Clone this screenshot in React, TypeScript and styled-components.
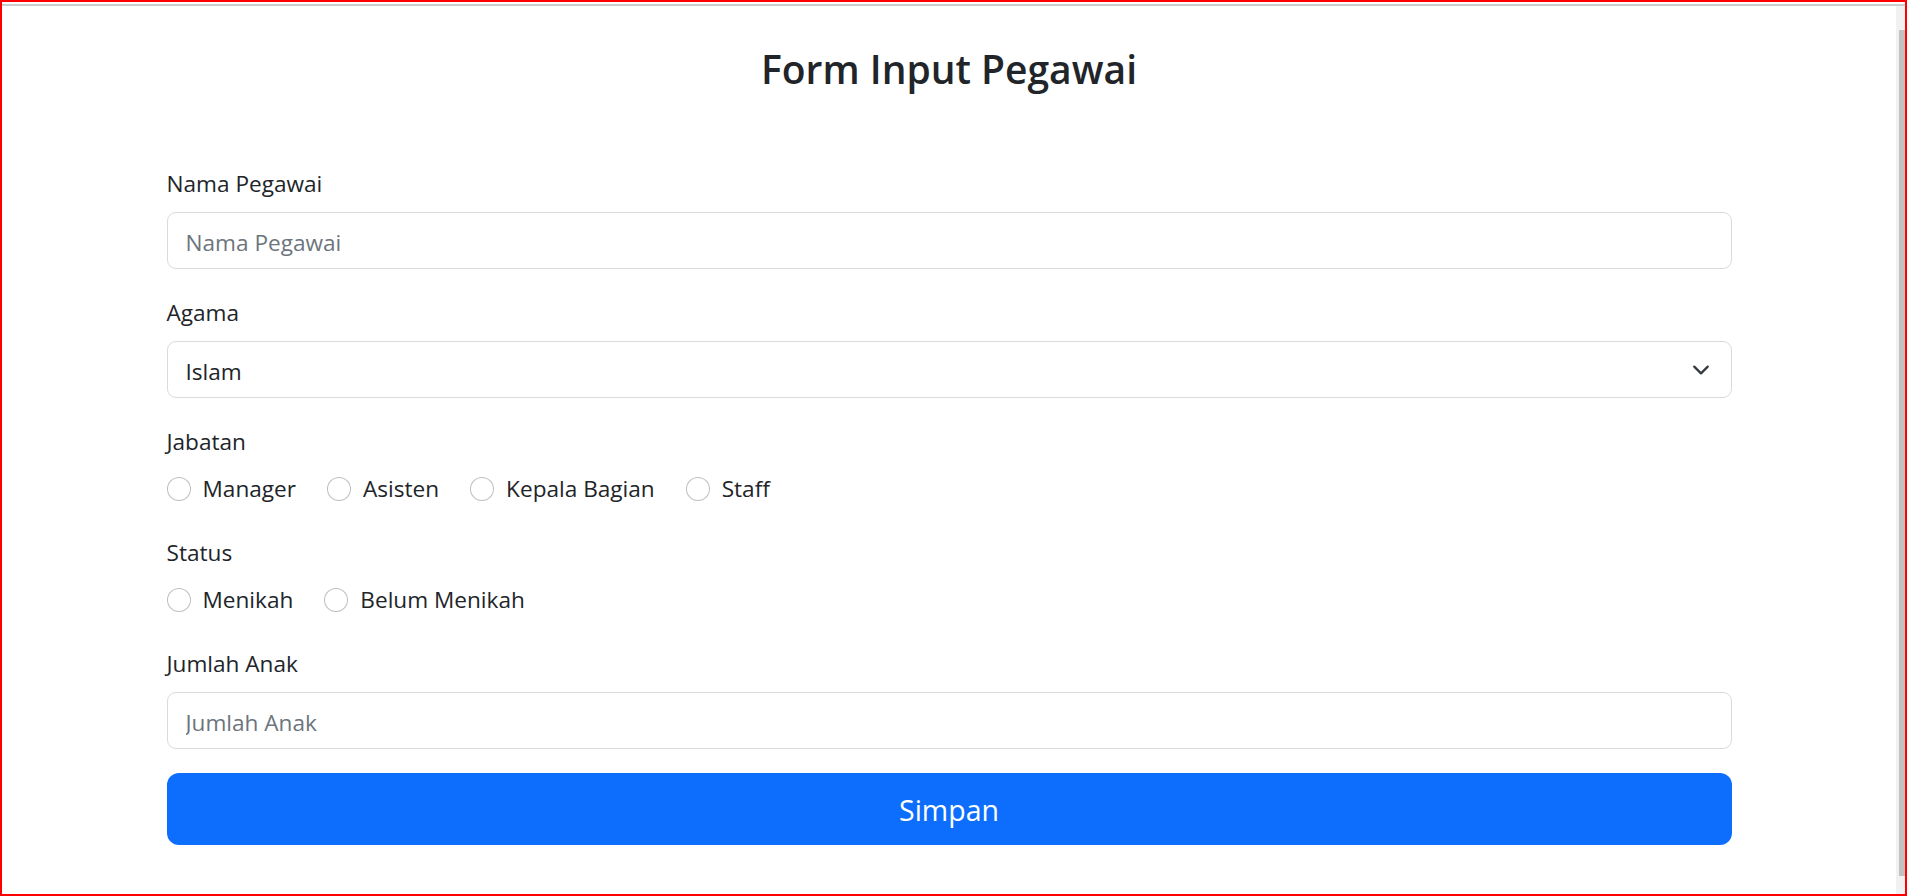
import styled, { createGlobalStyle } from 'styled-components';

const GlobalStyle = createGlobalStyle`
  html, body {
    margin: 0;
    padding: 0;
    background: #fff;
  }
  body {
    font-family: "Open Sans", "Noto Sans", sans-serif;
    color: #212529;
    overflow: hidden;
  }
  * {
    box-sizing: border-box;
  }
`;

const Frame = styled.div`
  width: 1907px;
  height: 896px;
  border: 2px solid #ff0000;
  display: flex;
  flex-direction: column;
  background: #fff;
`;

const ChromeEdge = styled.div`
  flex-shrink: 0;
  height: 2px;
  margin-top: 2px;
  background: #c8cfd0;
`;

const Viewport = styled.div`
  flex: 1;
  display: flex;
  min-height: 0;
`;

const Page = styled.main`
  flex: 1;
  padding-top: 39px;
  overflow: hidden;
`;

const Scrollbar = styled.div`
  width: 9px;
  display: flex;
  padding: 24px 0 18px 3px;
  background: #f1f1f1;
`;

const Thumb = styled.div`
  flex: 1;
  background: #c1c1c1;
`;

const Container = styled.div`
  width: 1565px;
  margin: 0 auto;
`;

const Title = styled.h3`
  margin: 0 0 71px;
  text-align: center;
  font-size: 39px;
  line-height: 48px;
  font-weight: 600;
  color: #212529;
`;

const Field = styled.div<{ $gap?: number }>`
  margin-bottom: ${(p) => p.$gap ?? 24}px;
`;

const Label = styled.label`
  display: block;
  padding-top: 2px;
  margin-bottom: 10px;
  font-size: 22.6px;
  line-height: 36px;
`;

const TextInput = styled.input`
  display: block;
  width: 100%;
  height: 57px;
  padding: 3px 18px 0;
  font-family: inherit;
  font-size: 22.6px;
  color: #212529;
  background: #fff;
  border: 1px solid #d8dbdf;
  border-radius: 9px;
  outline: none;

  &::placeholder {
    color: #6c757d;
  }
`;

const SelectWrap = styled.div`
  position: relative;
`;

const Select = styled.select`
  display: block;
  width: 100%;
  height: 57px;
  padding: 3px 54px 0 18px;
  font-family: inherit;
  font-size: 22.6px;
  color: #212529;
  background: #fff;
  border: 1px solid #d8dbdf;
  border-radius: 9px;
  appearance: none;
  outline: none;
`;

const Chevron = styled.svg`
  position: absolute;
  right: 22px;
  top: 50%;
  width: 18px;
  height: 18px;
  transform: translateY(-50%);
  pointer-events: none;
`;

const RadioRow = styled.div`
  display: flex;
  align-items: center;
  gap: 31px;
  height: 36px;
  padding-top: 2px;
`;

const RadioOption = styled.label`
  display: flex;
  align-items: center;
  gap: 12px;
  font-size: 22.6px;
  line-height: 34px;
`;

const Radio = styled.input`
  appearance: none;
  width: 24px;
  height: 24px;
  margin: 0 0 1px;
  border: 1px solid rgba(0, 0, 0, 0.25);
  border-radius: 50%;
  background: #fff;
`;

const SubmitButton = styled.button`
  display: block;
  width: 100%;
  height: 72px;
  padding-top: 2px;
  border: none;
  border-radius: 12px;
  background: #0d6efd;
  color: #fff;
  font-family: inherit;
  font-size: 28.5px;
`;

const jabatan = ['Manager', 'Asisten', 'Kepala Bagian', 'Staff'];
const status = ['Menikah', 'Belum Menikah'];

export default function App() {
  return (
    <>
      <GlobalStyle />
      <Frame>
        <ChromeEdge />
        <Viewport>
          <Page>
            <Container>
              <Title>Form Input Pegawai</Title>

              <Field>
                <Label htmlFor="nama">Nama Pegawai</Label>
                <TextInput id="nama" placeholder="Nama Pegawai" />
              </Field>

              <Field>
                <Label htmlFor="agama">Agama</Label>
                <SelectWrap>
                  <Select id="agama" defaultValue="Islam">
                    <option>Islam</option>
                    <option>Kristen</option>
                    <option>Katolik</option>
                    <option>Hindu</option>
                    <option>Budha</option>
                  </Select>
                  <Chevron viewBox="0 0 16 16">
                    <path
                      d="M2 5l6 6 6-6"
                      fill="none"
                      stroke="#343a40"
                      strokeWidth="2"
                      strokeLinecap="round"
                      strokeLinejoin="round"
                    />
                  </Chevron>
                </SelectWrap>
              </Field>

              <Field $gap={27}>
                <Label>Jabatan</Label>
                <RadioRow>
                  {jabatan.map((j) => (
                    <RadioOption key={j}>
                      <Radio type="radio" name="jabatan" value={j} />
                      {j}
                    </RadioOption>
                  ))}
                </RadioRow>
              </Field>

              <Field $gap={27}>
                <Label>Status</Label>
                <RadioRow>
                  {status.map((s) => (
                    <RadioOption key={s}>
                      <Radio type="radio" name="status" value={s} />
                      {s}
                    </RadioOption>
                  ))}
                </RadioRow>
              </Field>

              <Field>
                <Label htmlFor="anak">Jumlah Anak</Label>
                <TextInput id="anak" type="number" placeholder="Jumlah Anak" />
              </Field>

              <SubmitButton type="submit">Simpan</SubmitButton>
            </Container>
          </Page>
          <Scrollbar>
            <Thumb />
          </Scrollbar>
        </Viewport>
      </Frame>
    </>
  );
}
